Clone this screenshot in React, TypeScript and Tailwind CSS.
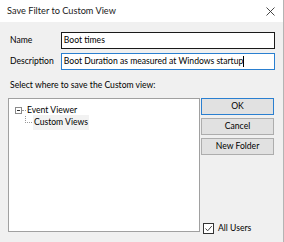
import React from 'react';

export default function App() {
  return (
    <div
      className="w-[284px] h-[242px] bg-[#f0f0f0] border-r border-[#b4b4b4] flex flex-col text-[8.6px] text-[#000] overflow-hidden"
      style={{ fontFamily: 'Lato, "Noto Sans", sans-serif' }}
    >
      <div className="h-[22px] bg-white flex items-center justify-between pl-[7px] pr-[7px] shrink-0">
        <span className="text-[9.2px] text-[#1a1a1a]">Save Filter to Custom View</span>
        <svg width="9" height="9" viewBox="0 0 9 9" className="mr-[1px]">
          <path d="M0.5 0.5 L8.5 8.5 M8.5 0.5 L0.5 8.5" stroke="#333" strokeWidth="0.9" />
        </svg>
      </div>

      <div className="flex flex-col pl-[8px] pr-[8px] pt-[10px]">
        <div className="flex items-center h-[17px]">
          <span className="w-[53px] pl-[2px]">Name</span>
          <div className="w-[215px] h-[17px] bg-white border border-[#1a1a1a] flex items-center pl-[2px]">
            Boot times
          </div>
        </div>
        <div className="flex items-center h-[17px] mt-[4px]">
          <span className="w-[53px] pl-[2px]">Description</span>
          <div className="w-[215px] h-[17px] bg-white border border-[#2a7fd0] flex items-center pl-[2px]">
            <span>Boot Duration as measured at Windows startup</span>
            <span className="w-px h-[11px] bg-black" />
          </div>
        </div>

        <div className="pl-[2px] mt-[9px] leading-[12px]">Select where to save the Custom view:</div>

        <div className="flex mt-[7px]">
          <div className="w-[192px] h-[134px] bg-white border border-[#a0a0a0] flex flex-col pt-[5px] pl-[6px]">
            <div className="flex items-center h-[12px]">
              <div className="w-[7px] h-[7px] border border-[#8a8a8a] flex items-center justify-center bg-white">
                <div className="w-[3px] h-px bg-[#333]" />
              </div>
              <div className="w-[4px] border-t border-dotted border-[#999]" />
              <span className="ml-[1px]">Event Viewer</span>
            </div>
            <div className="flex h-[14px]">
              <div className="ml-[10px] w-[7px] h-[7px] border-l border-b border-dotted border-[#999]" />
              <span className="ml-[1px] px-[1px] bg-[#f2f2f2] leading-[14px] -mt-[1px]">Custom Views</span>
            </div>
          </div>

          <div className="flex flex-col ml-[1px] w-[73px]">
            <div className="h-[17px] bg-[#e1e1e1] border border-[#2a7fd0] flex items-center justify-center">
              OK
            </div>
            <div className="h-[17px] mt-[3px] bg-[#e1e1e1] border border-[#adadad] flex items-center justify-center">
              Cancel
            </div>
            <div className="h-[17px] mt-[3px] bg-[#e1e1e1] border border-[#adadad] flex items-center justify-center">
              New Folder
            </div>
            <div className="flex items-center mt-auto -mb-[3px] pl-[2px] h-[14px]">
              <div className="w-[11px] h-[11px] border border-[#333] bg-white flex items-center justify-center">
                <svg width="9" height="9" viewBox="0 0 9 9">
                  <path d="M1.5 4.5 L3.7 6.8 L7.8 2" stroke="#333" strokeWidth="0.9" fill="none" />
                </svg>
              </div>
              <span className="ml-[4px]">All Users</span>
            </div>
          </div>
        </div>
      </div>
    </div>
  );
}
